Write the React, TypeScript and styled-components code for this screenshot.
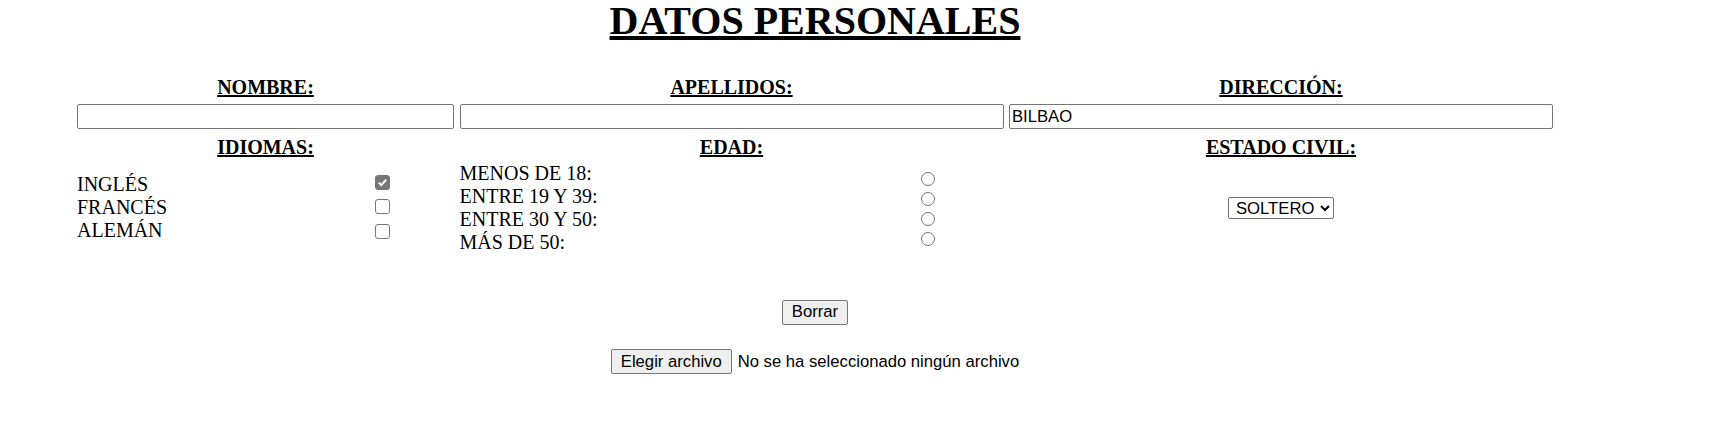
import * as React from 'react';
import styled, { createGlobalStyle } from 'styled-components';

const GlobalStyle = createGlobalStyle`
  body {
    margin: 0;
    background: #fff;
    color: #000;
    font-family: "Liberation Serif", "Times New Roman", serif;
    font-size: 20px;
  }
`;

const Page = styled.div`
  width: 1630px;
  display: flex;
  flex-direction: column;
  align-items: center;
`;

const Title = styled.h1`
  margin: 0;
  font-size: 40px;
  line-height: 42px;
  font-weight: bold;
  text-decoration: underline;
`;

const FormGrid = styled.div`
  margin-top: 34px;
  display: grid;
  grid-template-columns: 377px 544px 544px;
  column-gap: 5.5px;
`;

const Heading = styled.div`
  font-weight: bold;
  line-height: 23px;
  height: 23px;
  text-align: center;
  text-decoration: underline;
`;

const TextField = styled.input`
  box-sizing: border-box;
  width: 100%;
  height: 25px;
  margin: 5px 0 6.5px;
  padding: 0 2px;
  border: 1px solid #767676;
  border-radius: 2px;
  font-family: "Liberation Sans", Arial, sans-serif;
  font-size: 16.67px;
  color: #000;
  background: #fff;
  outline: none;
`;

const OptionsCell = styled.div<{ $labelWidth?: number }>`
  margin-top: 1px;
  height: 96px;
  display: grid;
  grid-template-columns: ${p => (p.$labelWidth ? `${p.$labelWidth}px auto` : '1fr')};
  align-items: center;
  justify-items: ${p => (p.$labelWidth ? 'start' : 'center')};
`;

const LabelList = styled.div`
  display: flex;
  flex-direction: column;
  line-height: 23px;
`;

const ControlList = styled.div`
  display: flex;
  flex-direction: column;
`;

const CheckRow = styled.div`
  height: 24.5px;
  display: flex;
  align-items: flex-start;
  padding-top: 4px;
  box-sizing: border-box;
`;

const CheckBox = styled.span<{ $checked?: boolean }>`
  box-sizing: border-box;
  width: 15px;
  height: 15px;
  border-radius: 3px;
  border: 1px solid #767676;
  background: ${p => (p.$checked ? '#767676' : '#fff')};
  display: flex;
  align-items: center;
  justify-content: center;
`;

const RadioRow = styled.div`
  height: 20px;
  display: flex;
  align-items: flex-start;
  padding-top: 4px;
  box-sizing: border-box;
`;

const Radio = styled.span`
  box-sizing: border-box;
  width: 14px;
  height: 14px;
  border-radius: 50%;
  border: 1px solid #767676;
  background: #fff;
`;

const Select = styled.select`
  height: 22px;
  padding: 0 2px 0 3px;
  border: 1px solid #767676;
  border-radius: 2px;
  background: #fff;
  color: #000;
  font-family: "Liberation Sans", Arial, sans-serif;
  font-size: 16.67px;
`;

const PushButton = styled.button`
  box-sizing: border-box;
  height: 25px;
  padding: 0 9px;
  border: 1px solid #767676;
  border-radius: 2px;
  background: #efefef;
  color: #000;
  font-family: "Liberation Sans", Arial, sans-serif;
  font-size: 16.67px;
`;

const ResetButton = styled(PushButton)`
  margin-top: 44px;
`;

const FileRow = styled.div`
  margin-top: 24.5px;
  display: flex;
  align-items: center;
  gap: 6px;
  font-family: "Liberation Sans", Arial, sans-serif;
  font-size: 16.67px;
`;

const Check = () => (
  <svg width="11" height="11" viewBox="0 0 11 11">
    <path d="M1.8 5.6 L4.3 8.1 L9.2 2.8" fill="none" stroke="#fff" strokeWidth="2" />
  </svg>
);

const languages = [
  { name: 'INGLÉS', checked: true },
  { name: 'FRANCÉS', checked: false },
  { name: 'ALEMÁN', checked: false },
];

const ages = ['MENOS DE 18:', 'ENTRE 19 Y 39:', 'ENTRE 30 Y 50:', 'MÁS DE 50:'];

export default function App() {
  return (
    <>
      <GlobalStyle />
      <Page>
        <Title>DATOS PERSONALES</Title>
        <FormGrid>
          <Heading>NOMBRE:</Heading>
          <Heading>APELLIDOS:</Heading>
          <Heading>DIRECCIÓN:</Heading>

          <TextField type="text" />
          <TextField type="text" />
          <TextField type="text" defaultValue="BILBAO" />

          <Heading>IDIOMAS:</Heading>
          <Heading>EDAD:</Heading>
          <Heading>ESTADO CIVIL:</Heading>

          <OptionsCell $labelWidth={298}>
            <LabelList>
              {languages.map(l => (
                <span key={l.name}>{l.name}</span>
              ))}
            </LabelList>
            <ControlList>
              {languages.map(l => (
                <CheckRow key={l.name}>
                  <CheckBox $checked={l.checked}>{l.checked && <Check />}</CheckBox>
                </CheckRow>
              ))}
            </ControlList>
          </OptionsCell>

          <OptionsCell $labelWidth={461}>
            <LabelList>
              {ages.map(a => (
                <span key={a}>{a}</span>
              ))}
            </LabelList>
            <ControlList>
              {ages.map(a => (
                <RadioRow key={a}>
                  <Radio />
                </RadioRow>
              ))}
            </ControlList>
          </OptionsCell>

          <OptionsCell>
            <Select defaultValue="soltero">
              <option value="soltero">SOLTERO</option>
              <option value="casado">CASADO</option>
            </Select>
          </OptionsCell>
        </FormGrid>

        <ResetButton type="button">Borrar</ResetButton>

        <FileRow>
          <PushButton type="button">Elegir archivo</PushButton>
          <span>No se ha seleccionado ningún archivo</span>
        </FileRow>
      </Page>
    </>
  );
}
